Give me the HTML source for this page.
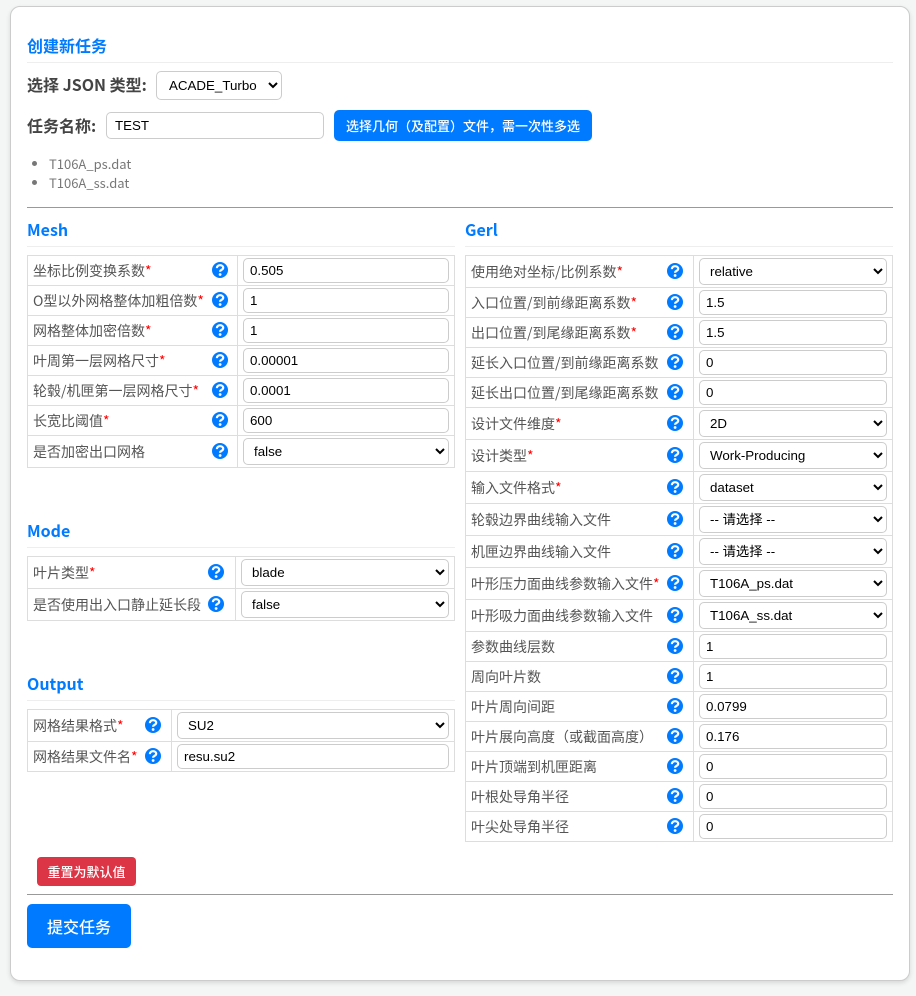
<!DOCTYPE html>
<html><head><meta charset="utf-8"><style>
html,body{margin:0;padding:0}
body{width:916px;height:996px;position:relative;background:#f4f6f6;overflow:hidden;font-family:"Liberation Sans","Noto Sans CJK SC",sans-serif;color:#555}
.card{position:absolute;left:10px;top:6px;width:898px;height:973px;background:#fff;border:1px solid #ccc;border-radius:10px;box-shadow:0 2px 5px rgba(0,0,0,.12)}
.a{position:absolute;white-space:nowrap}
.n{font-family:"Noto Sans CJK SC",sans-serif}
h3{position:absolute;margin:0;font:bold 16px/24px "Noto Sans CJK SC",sans-serif;color:#007bff;white-space:nowrap}
.hl{position:absolute;height:1px;background:#eee}
.hr{position:absolute;height:1px;background:#999}
table{position:absolute;border-collapse:collapse;table-layout:fixed}
td{border:1px solid #ddd;padding:0;position:relative;font:14px/20px "Noto Sans CJK SC",sans-serif;color:#555;white-space:nowrap}
td:first-child{padding-left:5px}
td:last-child{padding-left:5px}
b.r{color:#f00;font-weight:400}
input,select{display:block;box-sizing:border-box;border:1px solid #ccc;border-radius:5px;background:#fff;color:#000;font:13.33px "Liberation Sans",sans-serif;width:206px;margin:0;outline:0}
input{height:25px;padding:0 6px}
select{height:27px;padding:0 6px}
.w2 input,.w2 select{width:188px}
.m select{width:208px}
.o input,.o select{width:272px}
svg.q{position:absolute;top:50%;margin-top:-9px;width:16px;height:16px}
.t1 svg.q{left:183.5px}.t2 svg.q{left:201px}.t3 svg.q{left:180px}.t4 svg.q{left:117px}
.btn{position:absolute;color:#fff;text-align:center;white-space:nowrap;border-radius:4px;font-family:"Noto Sans CJK SC",sans-serif}
</style></head><body>
<div class="card"></div>

<h3 style="left:27px;top:33px">创建新任务</h3>
<div class="hl" style="left:27px;top:62px;width:866px"></div>
<div class="a n" style="left:27px;top:72px;font-size:16px;line-height:24px;font-weight:700;color:#444">选择 JSON 类型:</div>
<select style="position:absolute;left:156px;top:71px;width:126px;height:29px;padding:0 8px"><option>ACADE_Turbo</option></select>
<div class="a n" style="left:27px;top:113px;font-size:16px;line-height:24px;font-weight:700;color:#444">任务名称:</div>
<input style="position:absolute;left:106px;top:112px;width:218px;height:27px;padding:0 8px" value="TEST">
<div class="btn" style="left:334px;top:110px;width:258px;height:31px;line-height:31px;background:#007bff;font-size:13px;font-weight:500;border-radius:5px">选择几何（及配置）文件，需一次性多选</div>
<div class="a n" style="left:49px;top:154px;font-size:13px;line-height:19px;color:#777">T106A_ps.dat<br>T106A_ss.dat</div>
<div class="a" style="left:32px;top:161px;width:5px;height:5px;border-radius:50%;background:#777"></div>
<div class="a" style="left:32px;top:180px;width:5px;height:5px;border-radius:50%;background:#777"></div>
<div class="hr" style="left:27px;top:207px;width:866px"></div>

<h3 style="left:27px;top:217px">Mesh</h3>
<div class="hl" style="left:27px;top:246px;width:428px"></div>
<table class="t1" style="left:27px;top:255px;width:428px"><colgroup><col style="width:210px"><col></colgroup>
<tr style="height:30px"><td>坐标比例变换系数<b class="r">*</b><svg class="q" viewBox="0 0 16 16"><circle cx="8" cy="8" r="8" fill="#007bff"/><path d="M4.9 6.1c0-1.8 1.4-2.9 3.2-2.9 1.8 0 3.1 1.1 3.1 2.6 0 2.2-3.1 1.8-3.1 3.9" stroke="#fff" stroke-width="2.2" fill="none"/><circle cx="8.1" cy="12.5" r="1.4" fill="#fff"/></svg></td><td><input value="0.505"></td></tr>
<tr style="height:30px"><td>O型以外网格整体加粗倍数<b class="r">*</b><svg class="q" viewBox="0 0 16 16"><circle cx="8" cy="8" r="8" fill="#007bff"/><path d="M4.9 6.1c0-1.8 1.4-2.9 3.2-2.9 1.8 0 3.1 1.1 3.1 2.6 0 2.2-3.1 1.8-3.1 3.9" stroke="#fff" stroke-width="2.2" fill="none"/><circle cx="8.1" cy="12.5" r="1.4" fill="#fff"/></svg></td><td><input value="1"></td></tr>
<tr style="height:30px"><td>网格整体加密倍数<b class="r">*</b><svg class="q" viewBox="0 0 16 16"><circle cx="8" cy="8" r="8" fill="#007bff"/><path d="M4.9 6.1c0-1.8 1.4-2.9 3.2-2.9 1.8 0 3.1 1.1 3.1 2.6 0 2.2-3.1 1.8-3.1 3.9" stroke="#fff" stroke-width="2.2" fill="none"/><circle cx="8.1" cy="12.5" r="1.4" fill="#fff"/></svg></td><td><input value="1"></td></tr>
<tr style="height:30px"><td>叶周第一层网格尺寸<b class="r">*</b><svg class="q" viewBox="0 0 16 16"><circle cx="8" cy="8" r="8" fill="#007bff"/><path d="M4.9 6.1c0-1.8 1.4-2.9 3.2-2.9 1.8 0 3.1 1.1 3.1 2.6 0 2.2-3.1 1.8-3.1 3.9" stroke="#fff" stroke-width="2.2" fill="none"/><circle cx="8.1" cy="12.5" r="1.4" fill="#fff"/></svg></td><td><input value="0.00001"></td></tr>
<tr style="height:30px"><td>轮毂/机匣第一层网格尺寸<b class="r">*</b><svg class="q" viewBox="0 0 16 16"><circle cx="8" cy="8" r="8" fill="#007bff"/><path d="M4.9 6.1c0-1.8 1.4-2.9 3.2-2.9 1.8 0 3.1 1.1 3.1 2.6 0 2.2-3.1 1.8-3.1 3.9" stroke="#fff" stroke-width="2.2" fill="none"/><circle cx="8.1" cy="12.5" r="1.4" fill="#fff"/></svg></td><td><input value="0.0001"></td></tr>
<tr style="height:30px"><td>长宽比阈值<b class="r">*</b><svg class="q" viewBox="0 0 16 16"><circle cx="8" cy="8" r="8" fill="#007bff"/><path d="M4.9 6.1c0-1.8 1.4-2.9 3.2-2.9 1.8 0 3.1 1.1 3.1 2.6 0 2.2-3.1 1.8-3.1 3.9" stroke="#fff" stroke-width="2.2" fill="none"/><circle cx="8.1" cy="12.5" r="1.4" fill="#fff"/></svg></td><td><input value="600"></td></tr>
<tr style="height:32px"><td>是否加密出口网格<svg class="q" viewBox="0 0 16 16"><circle cx="8" cy="8" r="8" fill="#007bff"/><path d="M4.9 6.1c0-1.8 1.4-2.9 3.2-2.9 1.8 0 3.1 1.1 3.1 2.6 0 2.2-3.1 1.8-3.1 3.9" stroke="#fff" stroke-width="2.2" fill="none"/><circle cx="8.1" cy="12.5" r="1.4" fill="#fff"/></svg></td><td><select><option>false</option></select></td></tr>
</table>

<h3 style="left:27px;top:518px">Mode</h3>
<div class="hl" style="left:27px;top:547px;width:428px"></div>
<table class="t3 m" style="left:27px;top:556px;width:428px"><colgroup><col style="width:208px"><col></colgroup>
<tr style="height:32px"><td>叶片类型<b class="r">*</b><svg class="q" viewBox="0 0 16 16"><circle cx="8" cy="8" r="8" fill="#007bff"/><path d="M4.9 6.1c0-1.8 1.4-2.9 3.2-2.9 1.8 0 3.1 1.1 3.1 2.6 0 2.2-3.1 1.8-3.1 3.9" stroke="#fff" stroke-width="2.2" fill="none"/><circle cx="8.1" cy="12.5" r="1.4" fill="#fff"/></svg></td><td><select><option>blade</option></select></td></tr>
<tr style="height:32px"><td>是否使用出入口静止延长段<svg class="q" viewBox="0 0 16 16"><circle cx="8" cy="8" r="8" fill="#007bff"/><path d="M4.9 6.1c0-1.8 1.4-2.9 3.2-2.9 1.8 0 3.1 1.1 3.1 2.6 0 2.2-3.1 1.8-3.1 3.9" stroke="#fff" stroke-width="2.2" fill="none"/><circle cx="8.1" cy="12.5" r="1.4" fill="#fff"/></svg></td><td><select><option>false</option></select></td></tr>
</table>

<h3 style="left:27px;top:671px">Output</h3>
<div class="hl" style="left:27px;top:700px;width:428px"></div>
<table class="t4 o" style="left:27px;top:709px;width:428px"><colgroup><col style="width:144px"><col></colgroup>
<tr style="height:32px"><td>网格结果格式<b class="r">*</b><svg class="q" viewBox="0 0 16 16"><circle cx="8" cy="8" r="8" fill="#007bff"/><path d="M4.9 6.1c0-1.8 1.4-2.9 3.2-2.9 1.8 0 3.1 1.1 3.1 2.6 0 2.2-3.1 1.8-3.1 3.9" stroke="#fff" stroke-width="2.2" fill="none"/><circle cx="8.1" cy="12.5" r="1.4" fill="#fff"/></svg></td><td><select><option>SU2</option></select></td></tr>
<tr style="height:30px"><td>网格结果文件名<b class="r">*</b><svg class="q" viewBox="0 0 16 16"><circle cx="8" cy="8" r="8" fill="#007bff"/><path d="M4.9 6.1c0-1.8 1.4-2.9 3.2-2.9 1.8 0 3.1 1.1 3.1 2.6 0 2.2-3.1 1.8-3.1 3.9" stroke="#fff" stroke-width="2.2" fill="none"/><circle cx="8.1" cy="12.5" r="1.4" fill="#fff"/></svg></td><td><input value="resu.su2"></td></tr>
</table>

<h3 style="left:465px;top:217px">Gerl</h3>
<div class="hl" style="left:465px;top:246px;width:428px"></div>
<table class="t2 w2" style="left:465px;top:255px;width:428px"><colgroup><col style="width:228px"><col></colgroup>
<tr style="height:32px"><td>使用绝对坐标/比例系数<b class="r">*</b><svg class="q" viewBox="0 0 16 16"><circle cx="8" cy="8" r="8" fill="#007bff"/><path d="M4.9 6.1c0-1.8 1.4-2.9 3.2-2.9 1.8 0 3.1 1.1 3.1 2.6 0 2.2-3.1 1.8-3.1 3.9" stroke="#fff" stroke-width="2.2" fill="none"/><circle cx="8.1" cy="12.5" r="1.4" fill="#fff"/></svg></td><td><select><option>relative</option></select></td></tr>
<tr style="height:30px"><td>入口位置/到前缘距离系数<b class="r">*</b><svg class="q" viewBox="0 0 16 16"><circle cx="8" cy="8" r="8" fill="#007bff"/><path d="M4.9 6.1c0-1.8 1.4-2.9 3.2-2.9 1.8 0 3.1 1.1 3.1 2.6 0 2.2-3.1 1.8-3.1 3.9" stroke="#fff" stroke-width="2.2" fill="none"/><circle cx="8.1" cy="12.5" r="1.4" fill="#fff"/></svg></td><td><input value="1.5"></td></tr>
<tr style="height:30px"><td>出口位置/到尾缘距离系数<b class="r">*</b><svg class="q" viewBox="0 0 16 16"><circle cx="8" cy="8" r="8" fill="#007bff"/><path d="M4.9 6.1c0-1.8 1.4-2.9 3.2-2.9 1.8 0 3.1 1.1 3.1 2.6 0 2.2-3.1 1.8-3.1 3.9" stroke="#fff" stroke-width="2.2" fill="none"/><circle cx="8.1" cy="12.5" r="1.4" fill="#fff"/></svg></td><td><input value="1.5"></td></tr>
<tr style="height:30px"><td>延长入口位置/到前缘距离系数<svg class="q" viewBox="0 0 16 16"><circle cx="8" cy="8" r="8" fill="#007bff"/><path d="M4.9 6.1c0-1.8 1.4-2.9 3.2-2.9 1.8 0 3.1 1.1 3.1 2.6 0 2.2-3.1 1.8-3.1 3.9" stroke="#fff" stroke-width="2.2" fill="none"/><circle cx="8.1" cy="12.5" r="1.4" fill="#fff"/></svg></td><td><input value="0"></td></tr>
<tr style="height:30px"><td>延长出口位置/到尾缘距离系数<svg class="q" viewBox="0 0 16 16"><circle cx="8" cy="8" r="8" fill="#007bff"/><path d="M4.9 6.1c0-1.8 1.4-2.9 3.2-2.9 1.8 0 3.1 1.1 3.1 2.6 0 2.2-3.1 1.8-3.1 3.9" stroke="#fff" stroke-width="2.2" fill="none"/><circle cx="8.1" cy="12.5" r="1.4" fill="#fff"/></svg></td><td><input value="0"></td></tr>
<tr style="height:32px"><td>设计文件维度<b class="r">*</b><svg class="q" viewBox="0 0 16 16"><circle cx="8" cy="8" r="8" fill="#007bff"/><path d="M4.9 6.1c0-1.8 1.4-2.9 3.2-2.9 1.8 0 3.1 1.1 3.1 2.6 0 2.2-3.1 1.8-3.1 3.9" stroke="#fff" stroke-width="2.2" fill="none"/><circle cx="8.1" cy="12.5" r="1.4" fill="#fff"/></svg></td><td><select><option>2D</option></select></td></tr>
<tr style="height:32px"><td>设计类型<b class="r">*</b><svg class="q" viewBox="0 0 16 16"><circle cx="8" cy="8" r="8" fill="#007bff"/><path d="M4.9 6.1c0-1.8 1.4-2.9 3.2-2.9 1.8 0 3.1 1.1 3.1 2.6 0 2.2-3.1 1.8-3.1 3.9" stroke="#fff" stroke-width="2.2" fill="none"/><circle cx="8.1" cy="12.5" r="1.4" fill="#fff"/></svg></td><td><select><option>Work-Producing</option></select></td></tr>
<tr style="height:32px"><td>输入文件格式<b class="r">*</b><svg class="q" viewBox="0 0 16 16"><circle cx="8" cy="8" r="8" fill="#007bff"/><path d="M4.9 6.1c0-1.8 1.4-2.9 3.2-2.9 1.8 0 3.1 1.1 3.1 2.6 0 2.2-3.1 1.8-3.1 3.9" stroke="#fff" stroke-width="2.2" fill="none"/><circle cx="8.1" cy="12.5" r="1.4" fill="#fff"/></svg></td><td><select><option>dataset</option></select></td></tr>
<tr style="height:32px"><td>轮毂边界曲线输入文件<svg class="q" viewBox="0 0 16 16"><circle cx="8" cy="8" r="8" fill="#007bff"/><path d="M4.9 6.1c0-1.8 1.4-2.9 3.2-2.9 1.8 0 3.1 1.1 3.1 2.6 0 2.2-3.1 1.8-3.1 3.9" stroke="#fff" stroke-width="2.2" fill="none"/><circle cx="8.1" cy="12.5" r="1.4" fill="#fff"/></svg></td><td><select style="font-family:'Liberation Sans','Noto Sans CJK SC',sans-serif"><option>-- 请选择 --</option></select></td></tr>
<tr style="height:32px"><td>机匣边界曲线输入文件<svg class="q" viewBox="0 0 16 16"><circle cx="8" cy="8" r="8" fill="#007bff"/><path d="M4.9 6.1c0-1.8 1.4-2.9 3.2-2.9 1.8 0 3.1 1.1 3.1 2.6 0 2.2-3.1 1.8-3.1 3.9" stroke="#fff" stroke-width="2.2" fill="none"/><circle cx="8.1" cy="12.5" r="1.4" fill="#fff"/></svg></td><td><select style="font-family:'Liberation Sans','Noto Sans CJK SC',sans-serif"><option>-- 请选择 --</option></select></td></tr>
<tr style="height:32px"><td>叶形压力面曲线参数输入文件<b class="r">*</b><svg class="q" viewBox="0 0 16 16"><circle cx="8" cy="8" r="8" fill="#007bff"/><path d="M4.9 6.1c0-1.8 1.4-2.9 3.2-2.9 1.8 0 3.1 1.1 3.1 2.6 0 2.2-3.1 1.8-3.1 3.9" stroke="#fff" stroke-width="2.2" fill="none"/><circle cx="8.1" cy="12.5" r="1.4" fill="#fff"/></svg></td><td><select><option>T106A_ps.dat</option></select></td></tr>
<tr style="height:32px"><td>叶形吸力面曲线参数输入文件<svg class="q" viewBox="0 0 16 16"><circle cx="8" cy="8" r="8" fill="#007bff"/><path d="M4.9 6.1c0-1.8 1.4-2.9 3.2-2.9 1.8 0 3.1 1.1 3.1 2.6 0 2.2-3.1 1.8-3.1 3.9" stroke="#fff" stroke-width="2.2" fill="none"/><circle cx="8.1" cy="12.5" r="1.4" fill="#fff"/></svg></td><td><select><option>T106A_ss.dat</option></select></td></tr>
<tr style="height:30px"><td>参数曲线层数<svg class="q" viewBox="0 0 16 16"><circle cx="8" cy="8" r="8" fill="#007bff"/><path d="M4.9 6.1c0-1.8 1.4-2.9 3.2-2.9 1.8 0 3.1 1.1 3.1 2.6 0 2.2-3.1 1.8-3.1 3.9" stroke="#fff" stroke-width="2.2" fill="none"/><circle cx="8.1" cy="12.5" r="1.4" fill="#fff"/></svg></td><td><input value="1"></td></tr>
<tr style="height:30px"><td>周向叶片数<svg class="q" viewBox="0 0 16 16"><circle cx="8" cy="8" r="8" fill="#007bff"/><path d="M4.9 6.1c0-1.8 1.4-2.9 3.2-2.9 1.8 0 3.1 1.1 3.1 2.6 0 2.2-3.1 1.8-3.1 3.9" stroke="#fff" stroke-width="2.2" fill="none"/><circle cx="8.1" cy="12.5" r="1.4" fill="#fff"/></svg></td><td><input value="1"></td></tr>
<tr style="height:30px"><td>叶片周向间距<svg class="q" viewBox="0 0 16 16"><circle cx="8" cy="8" r="8" fill="#007bff"/><path d="M4.9 6.1c0-1.8 1.4-2.9 3.2-2.9 1.8 0 3.1 1.1 3.1 2.6 0 2.2-3.1 1.8-3.1 3.9" stroke="#fff" stroke-width="2.2" fill="none"/><circle cx="8.1" cy="12.5" r="1.4" fill="#fff"/></svg></td><td><input value="0.0799"></td></tr>
<tr style="height:30px"><td>叶片展向高度（或截面高度）<svg class="q" viewBox="0 0 16 16"><circle cx="8" cy="8" r="8" fill="#007bff"/><path d="M4.9 6.1c0-1.8 1.4-2.9 3.2-2.9 1.8 0 3.1 1.1 3.1 2.6 0 2.2-3.1 1.8-3.1 3.9" stroke="#fff" stroke-width="2.2" fill="none"/><circle cx="8.1" cy="12.5" r="1.4" fill="#fff"/></svg></td><td><input value="0.176"></td></tr>
<tr style="height:30px"><td>叶片顶端到机匣距离<svg class="q" viewBox="0 0 16 16"><circle cx="8" cy="8" r="8" fill="#007bff"/><path d="M4.9 6.1c0-1.8 1.4-2.9 3.2-2.9 1.8 0 3.1 1.1 3.1 2.6 0 2.2-3.1 1.8-3.1 3.9" stroke="#fff" stroke-width="2.2" fill="none"/><circle cx="8.1" cy="12.5" r="1.4" fill="#fff"/></svg></td><td><input value="0"></td></tr>
<tr style="height:30px"><td>叶根处导角半径<svg class="q" viewBox="0 0 16 16"><circle cx="8" cy="8" r="8" fill="#007bff"/><path d="M4.9 6.1c0-1.8 1.4-2.9 3.2-2.9 1.8 0 3.1 1.1 3.1 2.6 0 2.2-3.1 1.8-3.1 3.9" stroke="#fff" stroke-width="2.2" fill="none"/><circle cx="8.1" cy="12.5" r="1.4" fill="#fff"/></svg></td><td><input value="0"></td></tr>
<tr style="height:30px"><td>叶尖处导角半径<svg class="q" viewBox="0 0 16 16"><circle cx="8" cy="8" r="8" fill="#007bff"/><path d="M4.9 6.1c0-1.8 1.4-2.9 3.2-2.9 1.8 0 3.1 1.1 3.1 2.6 0 2.2-3.1 1.8-3.1 3.9" stroke="#fff" stroke-width="2.2" fill="none"/><circle cx="8.1" cy="12.5" r="1.4" fill="#fff"/></svg></td><td><input value="0"></td></tr>
</table>

<div class="btn" style="left:37px;top:857px;width:99px;height:29px;line-height:29px;background:#dc3545;font-size:13px;font-weight:500">重置为默认值</div>
<div class="hr" style="left:27px;top:894px;width:866px"></div>
<div class="btn" style="left:27px;top:904px;width:104px;height:44px;line-height:44px;background:#007bff;font-size:16px;font-weight:500;border-radius:5px">提交任务</div>
</body></html>
